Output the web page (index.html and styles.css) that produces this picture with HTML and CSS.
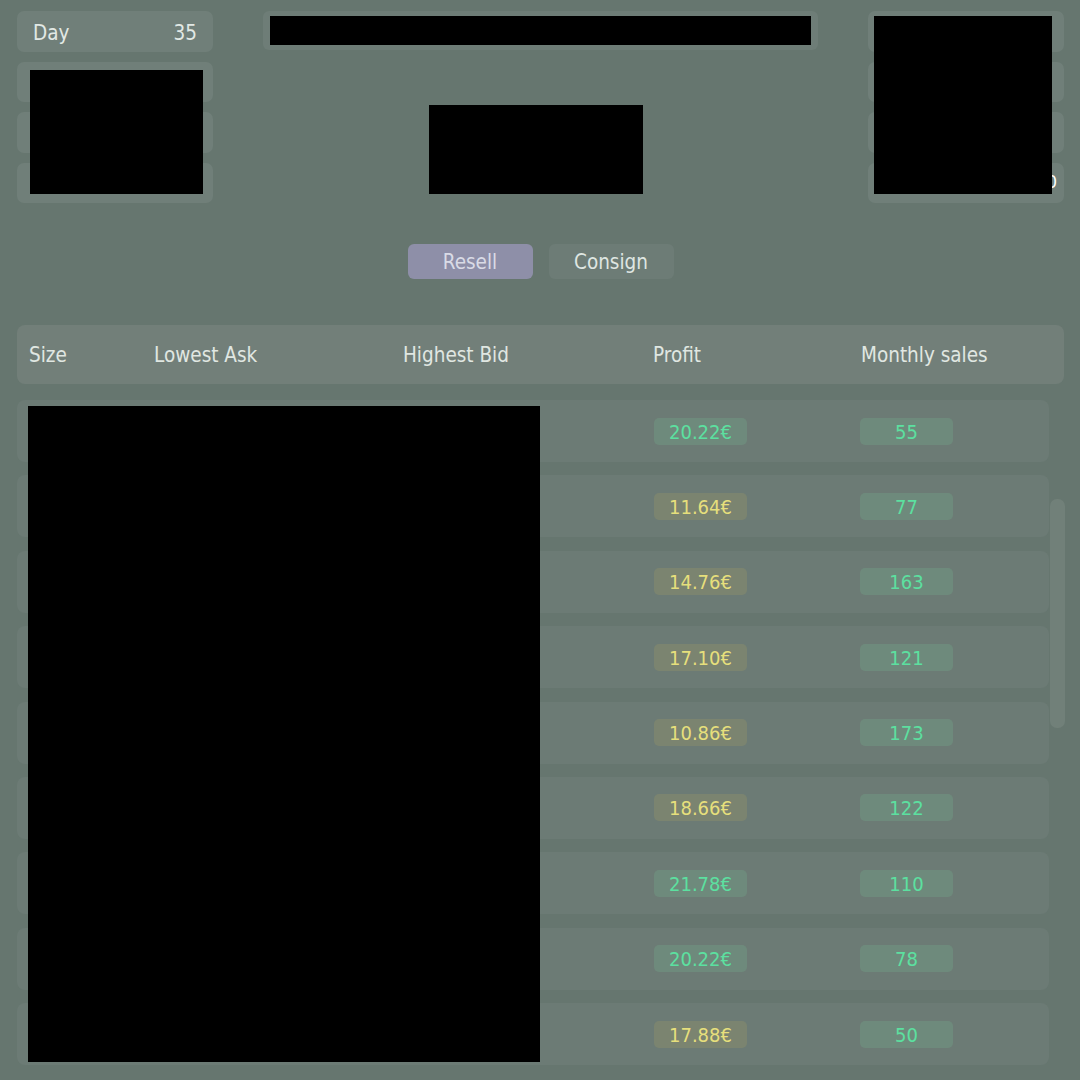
FILE: index.html
```html
<!DOCTYPE html>
<html lang="en">
<head>
  <meta charset="UTF-8">
  <title>Sneaker Market</title>
  <link rel="stylesheet" href="styles.css">
</head>
<body>
<div class="page">

  <!-- top stats -->
  <div class="top">
    <div class="stat-col">
      <div class="stat"><span>Day</span><span>35</span></div>
      <div class="stat"></div>
      <div class="stat"></div>
      <div class="stat"></div>
      <div class="redact redact-left"></div>
    </div>

    <div class="center-col">
      <div class="title-bar"><div class="redact-fill"></div></div>
      <div class="redact redact-mid"></div>
    </div>

    <div class="stat-col right">
      <div class="stat"></div>
      <div class="stat"></div>
      <div class="stat"></div>
      <div class="stat"><span></span><span class="peek">0</span></div>
      <div class="redact redact-right"></div>
    </div>
  </div>

  <!-- mode switch -->
  <div class="tabs">
    <button class="tab active">Resell</button>
    <button class="tab">Consign</button>
  </div>

  <!-- market table -->
  <div class="table-head">
    <span>Size</span>
    <span>Lowest Ask</span>
    <span>Highest Bid</span>
    <span>Profit</span>
    <span>Monthly sales</span>
  </div>

  <div class="list">
    <div class="rows" id="rows"></div>
    <div class="scroll-track"><div class="scroll-thumb"></div></div>
    <div class="redact redact-rows"></div>
  </div>

</div>

<script>
const data = [
  [20.22, 55], [11.64, 77], [14.76, 163], [17.10, 121], [10.86, 173],
  [18.66, 122], [21.78, 110], [20.22, 78], [17.88, 50]
];

const rows = document.getElementById("rows");
data.forEach(d => {
  const row = document.createElement("div");
  row.className = "row";
  const tone = d[0] >= 20 ? "good" : "ok";
  row.innerHTML =
    `<span></span><span></span><span></span>` +
    `<span><b class="badge ${tone}">${d[0].toFixed(2)}€</b></span>` +
    `<span><b class="badge good">${d[1]}</b></span>`;
  rows.appendChild(row);
});
</script>
</body>
</html>
```

FILE: styles.css
```css
body { margin: 0; background: #66766f; font-family: "DejaVu Sans Condensed", "DejaVu Sans", sans-serif; color: #e2e9e5; }
.page { position: relative; width: 1080px; height: 1080px; overflow: hidden; }

.top { display: flex; padding: 11px 16px 0 17px; height: 192px; }
.stat-col { position: relative; width: 196px; display: flex; flex-direction: column; gap: 10px; }
.stat {
  height: 41px; background: #707f79; border-radius: 7px; box-sizing: border-box;
  display: flex; justify-content: space-between; align-items: center;
  padding: 3px 16px 0; font-size: 20.5px;
}
.center-col { flex: 1; position: relative; padding: 0 50px; }
.title-bar { height: 39px; background: #6e7d77; border-radius: 6px; padding: 5px 7px; box-sizing: border-box; }
.redact-fill { background: #000; height: 100%; }
.peek { color: #fff; font-size: 18px; margin-right: -9px; margin-top: -6px; }

.redact { position: absolute; background: #000; }
.redact-left { left: 13px; top: 59px; width: 173px; height: 124px; }
.redact-mid { left: 216px; top: 94px; width: 214px; height: 89px; }
.redact-right { left: 6px; top: 5px; width: 178px; height: 178px; }
.redact-rows { left: 11px; top: 6px; width: 512px; height: 656px; }

.tabs { display: flex; justify-content: center; gap: 16px; margin-top: 41px; padding-left: 1px; }
.tab {
  width: 125px; height: 35px; border: none; border-radius: 6px;
  font-family: inherit; font-size: 20.5px; color: #dfe6e2; background: #6d7c76;
}
.tab.active { background: #8e8fa8; color: #d9dbe6; }

.table-head {
  display: grid; grid-template-columns: 125px 249px 250px 208px 1fr; align-items: center;
  margin: 46px 16px 0 17px; height: 59px; padding-left: 12px;
  background: #727f79; border-radius: 8px; font-size: 20.5px; color: #e0e7e2;
}

.list { position: relative; display: flex; margin: 16px 0 0 17px; }
.rows { width: 1032px; display: flex; flex-direction: column; gap: 13.4px; }
.row {
  display: grid; grid-template-columns: 125px 249px 251px 206px 1fr; align-items: center;
  height: 62px; padding-left: 12px; background: #6c7b75; border-radius: 8px;
}
.badge {
  display: inline-block; width: 93px; height: 27px; line-height: 28px; text-align: center;
  border-radius: 5px; font-weight: normal; font-size: 20px;
}
.badge.good { background: #6e8a7c; color: #5ce0a0; }
.badge.ok { background: #7b8470; color: #e6df7c; }

.scroll-track { width: 15px; margin-left: 1px; padding-top: 99px; }
.scroll-thumb { height: 229px; background: #718079; border-radius: 7px; }
```
